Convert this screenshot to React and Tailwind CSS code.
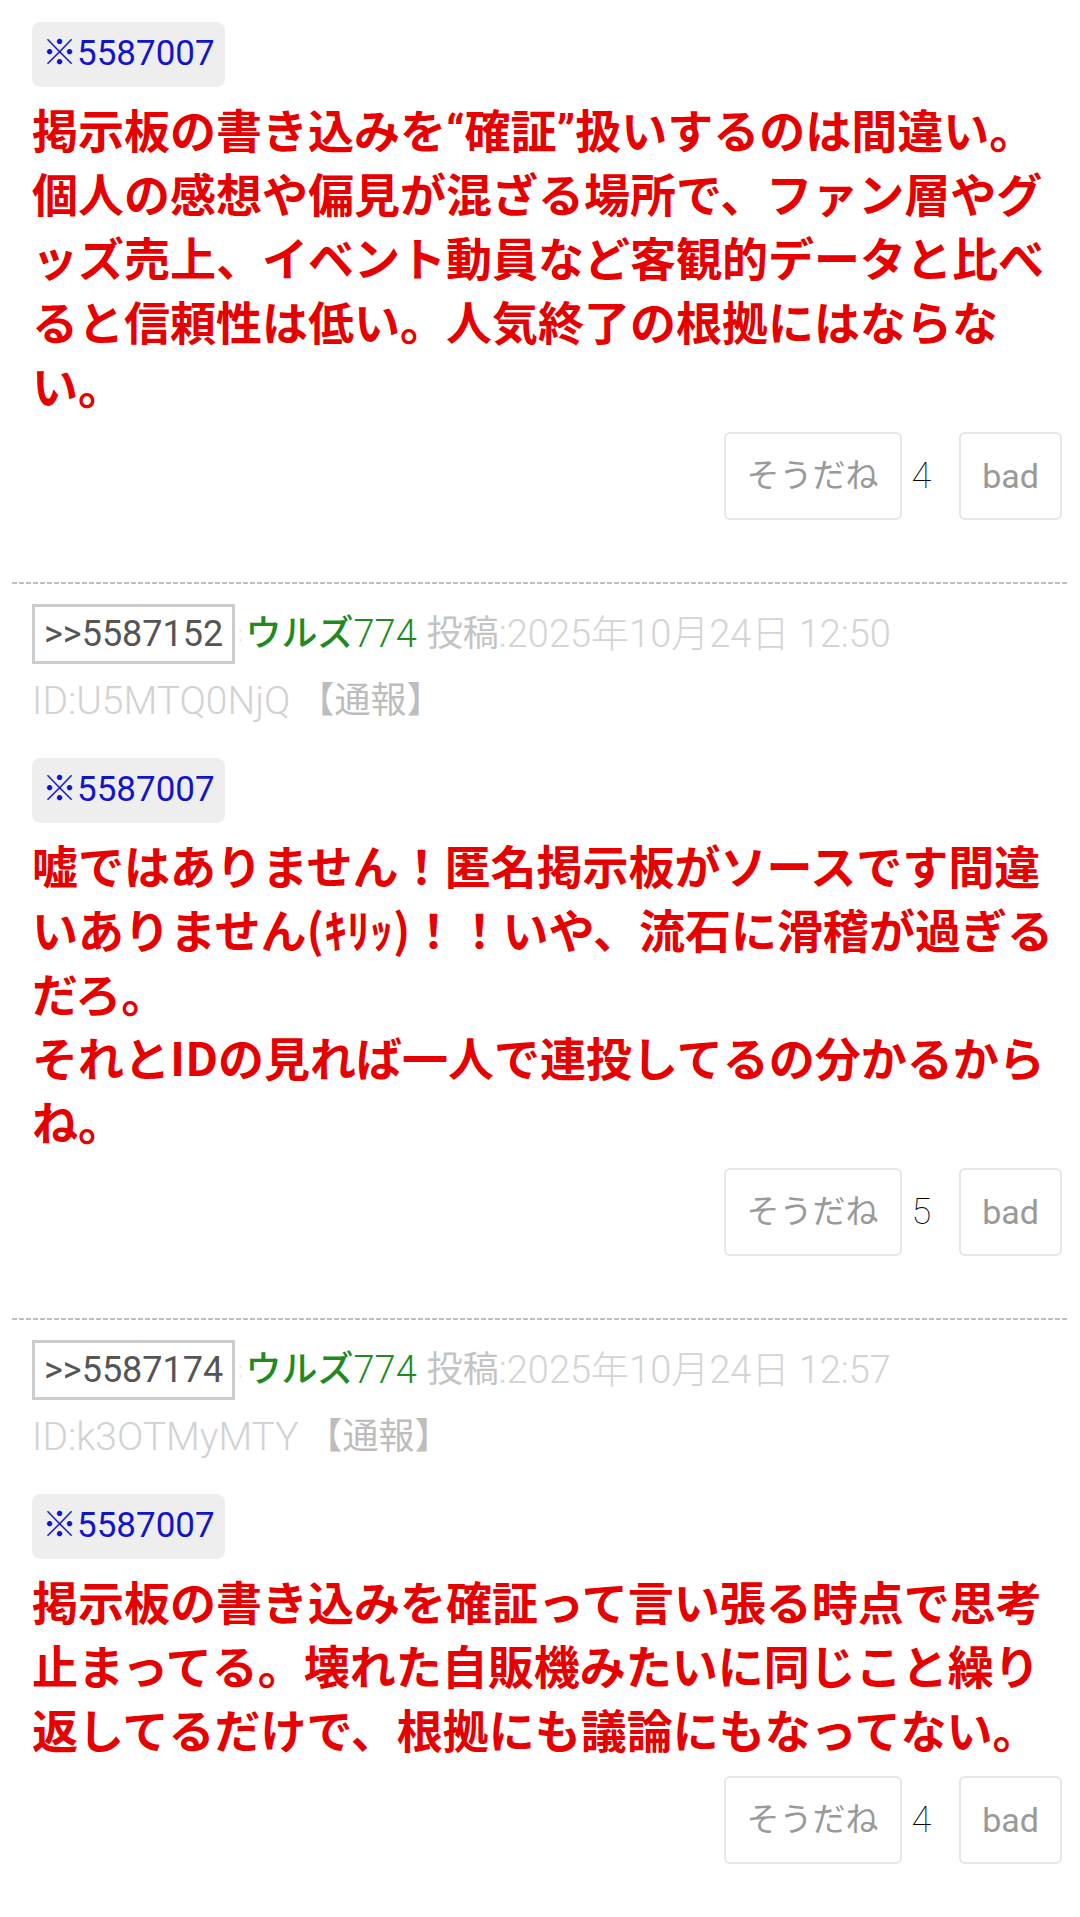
import React from 'react';

const Q = ({ children }) => (
    <span className="leading-none" style={{ fontFamily: 'Roboto, sans-serif' }}>{children}</span>
);

const posts = [
    {
        head: null,
        quote: '※5587007',
        body: [
            <>掲示板の書き込みを<Q>“</Q>確証<Q>”</Q>扱いするのは間違い。</>,
            '個人の感想や偏見が混ざる場所で、ファン層やグッズ売上、イベント動員など客観的データと比べると信頼性は低い。人気終了の根拠にはならない。',
        ],
        likes: 4,
    },
    {
        head: { no: '5587152', date: '2025年10月24日 12:50', id: 'U5MTQ0NjQ' },
        quote: '※5587007',
        body: [
            '嘘ではありません！匿名掲示板がソースです間違いありません(ｷﾘｯ)！！いや、流石に滑稽が過ぎるだろ。',
            'それとIDの見れば一人で連投してるの分かるからね。',
        ],
        likes: 5,
    },
    {
        head: { no: '5587174', date: '2025年10月24日 12:57', id: 'k3OTMyMTY' },
        quote: '※5587007',
        body: [
            '掲示板の書き込みを確証って言い張る時点で思考止まってる。壊れた自販機みたいに同じこと繰り返してるだけで、根拠にも議論にもなってない。',
        ],
        likes: 4,
    },
];

const Header = ({ no, date, id }) => (
    <div className="text-[36px]">
        {/* 番号・名前・日付 */}
        <div className="flex items-center h-[60px] whitespace-nowrap">
            <span className="h-[60px] flex items-center px-[9px] border-[3px] border-[#cccccc] text-[#555555] leading-none">
                &gt;&gt;{no}
            </span>
            <span className="text-[#dddddd] font-light text-[20px] mx-[3px]">:</span>
            <span className="text-[#1f8a1f] font-medium">ウルズ</span>
            <span className="text-[#1f8a1f] font-light text-[38px]">774</span>
            <span className="ml-[10px] text-[#c4c4c4]">投稿</span>
            <span className="text-[#d4d4d4] font-light text-[38px]">:{date}</span>
        </div>
        {/* ID・通報 */}
        <div className="flex items-center h-[74px] whitespace-nowrap">
            <span className="text-[#d2d2d2] font-light text-[39px]">ID:{id}</span>
            <span className="ml-[8px] text-[#bdbdbd]">【通報】</span>
        </div>
    </div>
);

const Post = ({ post, first }) => (
    <div
        className={`mx-[12px] pl-[20px] pr-[6px] pt-[22px] pb-[62px] ${
            first ? '' : 'bg-[repeating-linear-gradient(90deg,#bfbfbf_0_5px,transparent_5px_7px)] bg-no-repeat bg-[length:100%_2px] bg-top'
        }`}
    >
        {post.head && (
            <div className="mb-[20px]">
                <Header {...post.head} />
            </div>
        )}

        <div className="inline-flex items-center h-[65px] px-[10px] rounded-[8px] bg-[#eeeeee] text-[35px] text-[#1515c8]">
            {post.quote}
        </div>

        <div
            className="mt-[9px] mr-[-10px] text-[46px] leading-[64px] font-bold text-[#e60000]"
            style={{ fontFamily: '"Noto Sans CJK JP", sans-serif' }}
        >
            {post.body.map((line, i) => (
                <React.Fragment key={i}>
                    {i > 0 && <br />}
                    {line}
                </React.Fragment>
            ))}
        </div>

        {/* そうだね / bad */}
        <div className="flex justify-end items-center mt-[16px]">
            <button className="h-[88px] px-[21px] border-2 border-[#e6e6e6] rounded-[6px] text-[33px] text-[#999999] bg-white">
                そうだね
            </button>
            <span className="ml-[10px] mr-[28px] text-[36px] font-thin text-black">{post.likes}</span>
            <button className="h-[88px] px-[21px] border-2 border-[#e6e6e6] rounded-[6px] text-[34px] text-[#999999] bg-white">
                bad
            </button>
        </div>
    </div>
);

export default function App() {
    return (
        <div
            className="w-[1080px] min-h-[1917px] bg-white overflow-hidden"
            style={{ fontFamily: 'Roboto, "Noto Sans CJK JP", sans-serif' }}
        >
            {posts.map((post, i) => (
                <Post key={i} post={post} first={i === 0} />
            ))}
        </div>
    );
}
